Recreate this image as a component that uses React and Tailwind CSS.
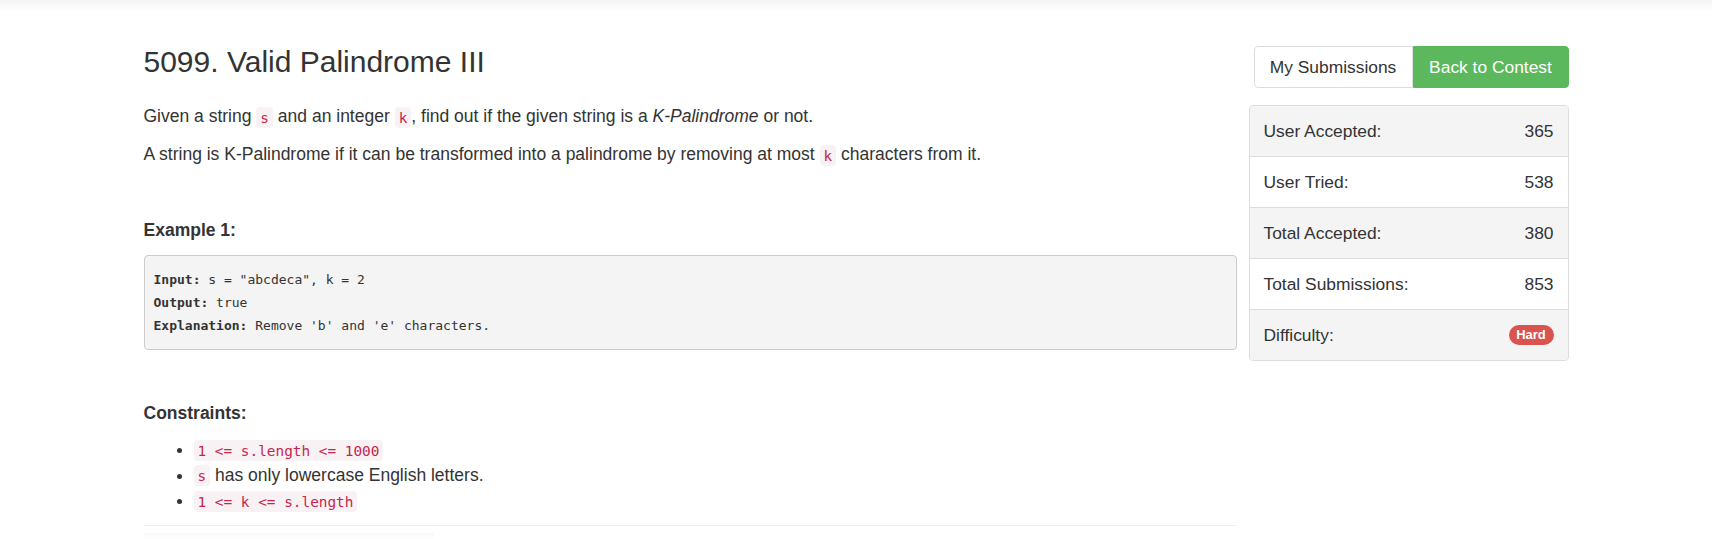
import React from "react";

const sans = { fontFamily: '"Liberation Sans", Arial, sans-serif' };

// inline code chip
const Code = ({ children }) => (
  <code className="rounded-[4px] bg-[#f9f2f4] px-[4px] py-[2.5px] font-['DejaVu_Sans_Mono',monospace] text-[14.4px] leading-none text-[#c7254e]">
    {children}
  </code>
);

const stats = [
  { label: "User Accepted:", value: "365" },
  { label: "User Tried:", value: "538" },
  { label: "Total Accepted:", value: "380" },
  { label: "Total Submissions:", value: "853" },
];

export default function App() {
  return (
    <div className="min-h-[539px] bg-white text-[#333]" style={sans}>
      {/* navbar shadow */}
      <div className="h-[12px] bg-linear-to-b from-[#f5f5f5] to-white" />

      <div className="mx-auto flex w-[1425px] pt-[33px]">
        {/* Left: question */}
        <div className="w-[1093px]">
          <h3 className="text-[30px] leading-[33px] font-normal">5099. Valid Palindrome III</h3>

          <div className="mt-[26px] text-[17.5px] leading-[24px]">
            <p>
              Given a string <Code>s</Code> and an integer <Code>k</Code>, find out if the given string is a{" "}
              <em>K-Palindrome</em> or not.
            </p>
            <p className="mt-[14px]">
              A string is K-Palindrome if it can be transformed into a palindrome by removing at most{" "}
              <Code>k</Code> characters from it.
            </p>

            <p className="mt-[52px] font-bold">Example 1:</p>

            <pre className="mt-[13px] rounded-[4px] border border-[#ccc] bg-[#f4f4f4] px-[9px] py-[12px] font-['DejaVu_Sans_Mono',monospace] text-[13px] leading-[23px] text-[#333]">
              <strong>Input:</strong> s = "abcdeca", k = 2{"\n"}
              <strong>Output:</strong> true{"\n"}
              <strong>Explanation:</strong> Remove 'b' and 'e' characters.
            </pre>

            <p className="mt-[51px] font-bold">Constraints:</p>

            <ul className="mt-[12px] list-disc pl-[50px] leading-[25.5px]">
              <li>
                <Code>1 &lt;= s.length &lt;= 1000</Code>
              </li>
              <li>
                <Code>s</Code> has only lowercase English letters.
              </li>
              <li>
                <Code>1 &lt;= k &lt;= s.length</Code>
              </li>
            </ul>
          </div>

          <hr className="mt-[11px] border-t border-[#eee]" />
          <div className="mt-[7px] h-[8px] w-[290px] bg-linear-to-b from-[#fafafa] to-white" />
        </div>

        {/* Right: actions and stats */}
        <div className="ml-[12px] w-[320px]">
          <div className="mt-px flex justify-end">
            <div className="flex text-[17.4px]">
              <button className="h-[42px] w-[159px] rounded-l-[4px] border border-[#ddd] bg-white text-[#333]">
                My Submissions
              </button>
              <button className="h-[42px] w-[156px] rounded-r-[4px] border border-[#5cb85c] bg-[#5cb85c] text-white">
                Back to Contest
              </button>
            </div>
          </div>

          <div className="mt-[17px] overflow-hidden rounded-[4px] border border-[#ddd] text-[17.4px]">
            {stats.map((s, i) => (
              <div
                key={s.label}
                className={`flex h-[51px] items-center justify-between border-b border-[#ddd] px-[14px] ${
                  i % 2 === 0 ? "bg-[#f4f4f4]" : "bg-white"
                }`}
              >
                <span>{s.label}</span>
                <span>{s.value}</span>
              </div>
            ))}
            <div className="flex h-[50px] items-center justify-between bg-[#f4f4f4] px-[14px]">
              <span>Difficulty:</span>
              <span className="flex h-[20px] w-[45px] items-center justify-center rounded-full bg-[#d9534f] text-[13px] font-bold text-white">
                Hard
              </span>
            </div>
          </div>
        </div>
      </div>
    </div>
  );
}
